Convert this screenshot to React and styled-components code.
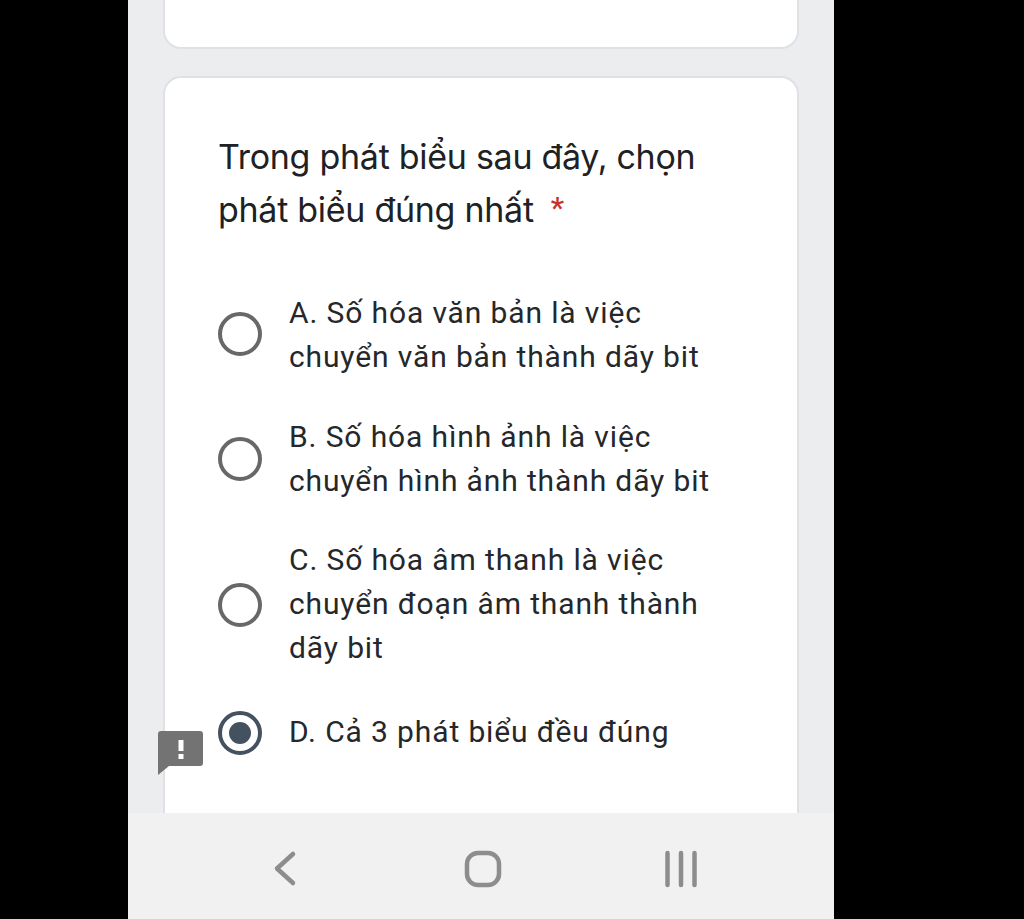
import React from "react";
import styled, { createGlobalStyle } from "styled-components";

const Global = createGlobalStyle`
  html, body { margin: 0; padding: 0; background: #000; }
  body { height: 919px; overflow: hidden; }
`;
const Page = styled.div`
  display: flex; justify-content: flex-start; height: 919px; padding-left: 128px; box-sizing: border-box; background: #000;
`;
const Phone = styled.div`
  width: 706px; height: 919px; display: flex; flex-direction: column; background: #ebedef; position: relative; overflow: hidden;
`;
const Scroll = styled.div`
  flex: 1; min-height: 0; overflow: hidden; padding: 0 35px; display: flex; flex-direction: column; gap: 27px;
`;
const TopCard = styled.div`
  height: 49px; flex: none; box-sizing: border-box; background: #fff; border: 2px solid #dfe1e4; border-top: none; border-radius: 0 0 18px 18px;
`;
const Card = styled.div`
  flex: 1; background: #fff; border: 2px solid #dfe1e4; border-bottom: none; border-radius: 18px 18px 0 0; padding: 52px 53px 0; min-height: 0;
`;
const Question = styled.h2`
  margin: 0 0 55px; font: 400 34px/53px Inter, sans-serif; color: #202124; width: 520px; letter-spacing: -0.28px;
`;
const Star = styled.span` color: #c5342b; font: 500 30px/1 Roboto, sans-serif; margin-left: 17px; vertical-align: 4px; `;
const Option = styled.div`
  display: flex; align-items: center; gap: 27px; margin-top: ${(p) => p.$gap}px;
`;
const Radio = styled.span`
  flex: none; width: 44px; height: 44px; box-sizing: border-box; border-radius: 50%; border: 4px solid ${(p) => (p.$on ? "#44525f" : "#686868")};
  display: flex; align-items: center; justify-content: center; transform: translateY(${(p) => p.$dy}px);
`;
const Dot = styled.span` width: 22px; height: 22px; border-radius: 50%; background: #44525f; `;
const Label = styled.div`
  font: 400 30px/44px Roboto, sans-serif; color: #25272a; width: 450px; letter-spacing: 0.87px;
`;
const Badge = styled.svg` position: absolute; left: 30px; top: 730px; `;
const Nav = styled.nav`
  height: 106px; flex: none; background: #f1f1f1; display: grid; grid-template-columns: repeat(3, 198px); align-items: center; padding: 6px 0 0 58px; box-sizing: border-box;
`;
const NavCell = styled.div` display: flex; justify-content: center; `;
const NavIcon = styled.svg` display: block; fill: none; stroke: #8d8d8d; stroke-width: 4.5; stroke-linecap: round; stroke-linejoin: round; `;

const options = [
  { text: <>A. Số hóa văn bản là việc<br />chuyển văn bản thành dãy bit</>, gap: 0, dy: -1 },
  { text: <>B. Số hóa hình ảnh là việc<br />chuyển hình ảnh thành dãy bit</>, gap: 36, dy: 0 },
  { text: <>C. Số hóa âm thanh là việc<br />chuyển đoạn âm thanh thành<br />dãy bit</>, gap: 35, dy: 1 },
  { text: <>D. Cả 3 phát biểu đều đúng</>, gap: 40, dy: 1, on: true },
];

export default function App() {
  return (
    <Page>
      <Global />
      <Phone>
        <Scroll>
          <TopCard />
          <Card>
            <Question>Trong phát biểu sau đây, chọn phát biểu đúng nhất<Star>*</Star></Question>
            {options.map((o, i) => (
              <Option key={i} $gap={o.gap}>
                <Radio $on={o.on} $dy={o.dy}>{o.on && <Dot />}</Radio>
                <Label>{o.text}</Label>
              </Option>
            ))}
          </Card>
        </Scroll>
        <Badge width="46" height="46" viewBox="0 0 46 46">
          <path d="M3 1H42a3 3 0 0 1 3 3V33a3 3 0 0 1-3 3H11L0 45V4a3 3 0 0 1 3-3Z" fill="#737373" />
          <rect x="20.5" y="10" width="5" height="11" fill="#fff" />
          <rect x="20.5" y="24" width="5" height="5" fill="#fff" />
        </Badge>
        <Nav>
          <NavCell>
            <NavIcon width="30" height="40" viewBox="0 0 30 40">
              <path d="M23 5 L7 19.500 L23 34" />
            </NavIcon>
          </NavCell>
          <NavCell>
            <NavIcon width="40" height="40" viewBox="0 0 40 40">
              <rect x="4" y="4" width="32" height="32" rx="11" />
            </NavIcon>
          </NavCell>
          <NavCell>
            <NavIcon width="40" height="40" viewBox="0 0 40 40">
              <path d="M6.500 4V36M20 4V36M33.500 4V36" />
            </NavIcon>
          </NavCell>
        </Nav>
      </Phone>
    </Page>
  );
}
